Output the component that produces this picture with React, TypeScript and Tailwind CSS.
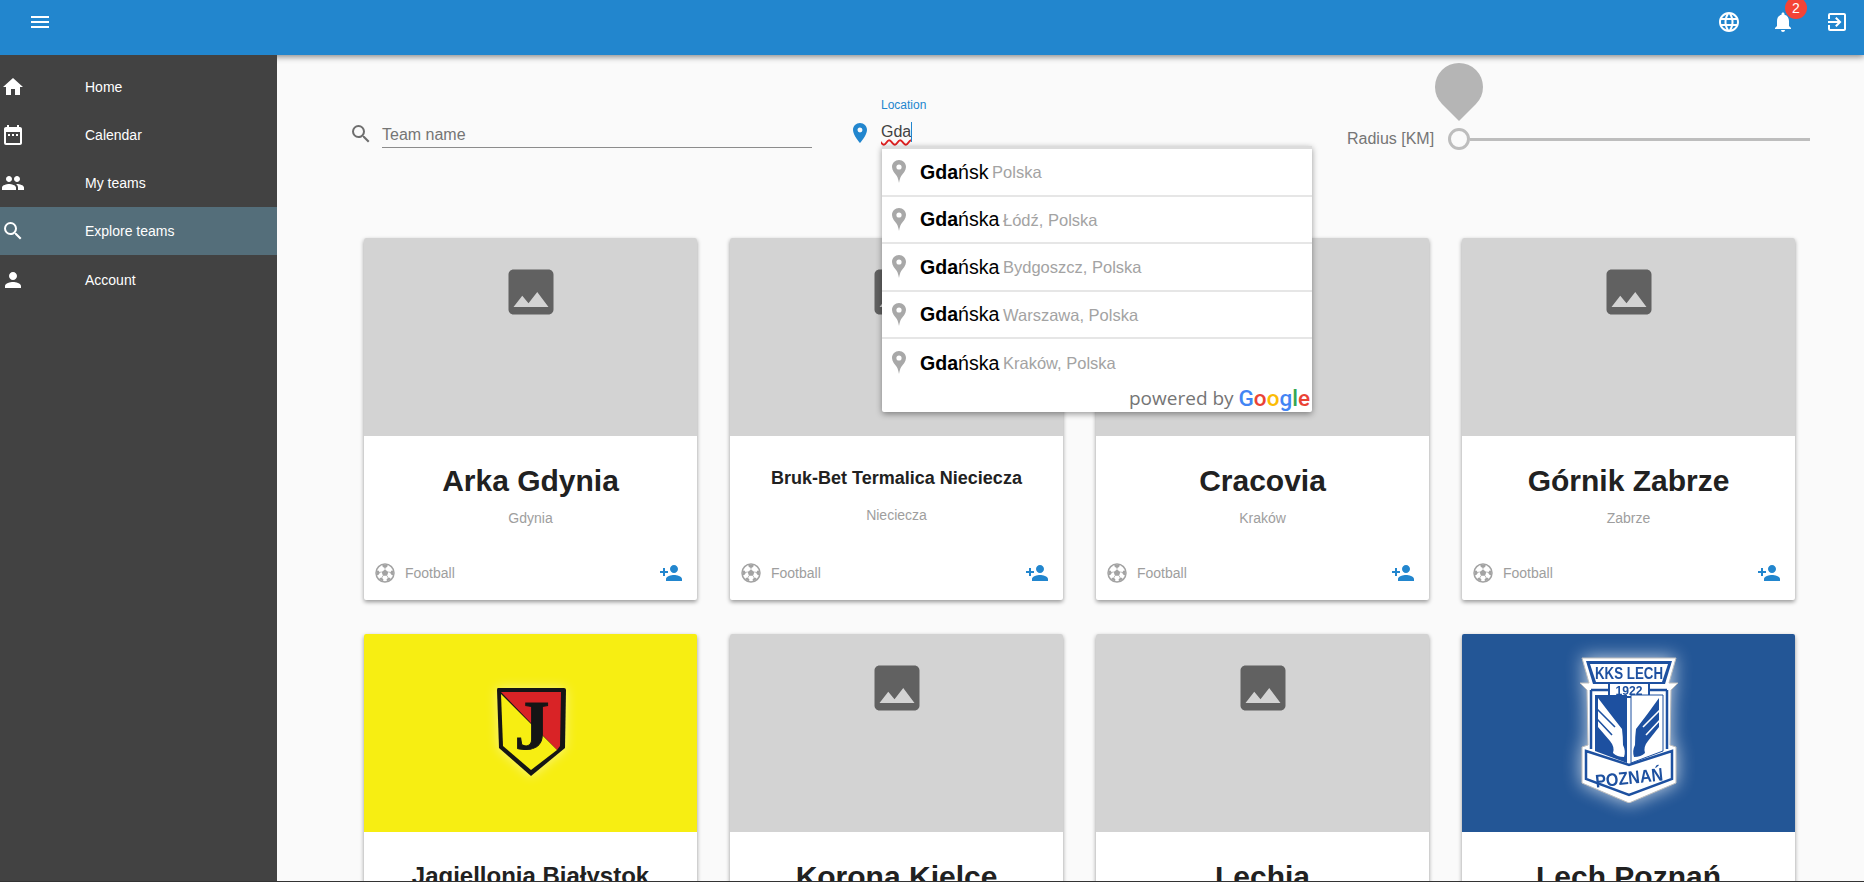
import {
  MdDateRange,
  MdExitToApp,
  MdHome,
  MdImage,
  MdLanguage,
  MdMenu,
  MdNotifications,
  MdPeople,
  MdPerson,
  MdPersonAdd,
  MdPlace,
  MdSearch,
} from "react-icons/md";

const FONT = "font-['Liberation_Sans',Arial,sans-serif]";

const navItems = [
  { label: "Home", icon: MdHome },
  { label: "Calendar", icon: MdDateRange },
  { label: "My teams", icon: MdPeople },
  { label: "Explore teams", icon: MdSearch, active: true },
  { label: "Account", icon: MdPerson, last: true },
];

const suggestions = [
  { rest: "ńsk", place: "Polska" },
  { rest: "ńska", place: "Łódź, Polska" },
  { rest: "ńska", place: "Bydgoszcz, Polska" },
  { rest: "ńska", place: "Warszawa, Polska" },
  { rest: "ńska", place: "Kraków, Polska" },
];

const DEFAULT_TITLE = "text-[30px] mt-[27px] mb-[11px]";

const teams = [
  { name: "Arka Gdynia", city: "Gdynia", title: DEFAULT_TITLE },
  { name: "Bruk-Bet Termalica Nieciecza", city: "Nieciecza", title: "text-[18px] mt-[25px] mb-[10px]" },
  { name: "Cracovia", city: "Kraków", title: DEFAULT_TITLE },
  { name: "Górnik Zabrze", city: "Zabrze", title: DEFAULT_TITLE },
  { name: "Jagiellonia Białystok", city: "Białystok", title: "text-[24px] mt-[27px] mb-[11px]", logo: "jagiellonia" },
  { name: "Korona Kielce", city: "Kielce", title: DEFAULT_TITLE },
  { name: "Lechia", city: "Gdańsk", title: DEFAULT_TITLE },
  { name: "Lech Poznań", city: "Poznań", title: DEFAULT_TITLE, logo: "lech" },
];

function JagielloniaLogo() {
  return (
    <svg viewBox="0 0 72 92" className="w-[72px] h-[92px] drop-shadow-[0_0_6px_rgba(255,255,255,0.5)]">
      <path
        d="M3 2 L69 2 Q71 2 71 4 L70 62 L36 90 L4 62 L2 4 Q2 2 3 2 Z"
        fill="#151515"
      />
      <path d="M6 6 L66 6 L65 60 L62 64 Z" fill="#d92326" />
      <path d="M6 8 L62 64 L36 84 L8 60 Z" fill="#f7ee12" />
      <text
        x="37"
        y="63"
        textAnchor="middle"
        fontFamily="'Liberation Serif', serif"
        fontWeight="700"
        fontSize="70"
        fill="#151515"
        stroke="#151515"
        strokeWidth="1"
      >
        J
      </text>
    </svg>
  );
}

function LechLogo() {
  return (
    <svg viewBox="0 0 100 146" className="w-[100px] h-[146px] drop-shadow-[0_0_9px_rgba(255,255,255,0.75)]">
      <path
        d="M3 1 L97 1 L90 26 L99 26 L92 33 L91 88 L97 90 L97 126 L50 146 L3 126 L3 90 L9 88 L8 33 L1 26 L10 26 Z"
        fill="#ffffff"
        stroke="#bdbdbd"
        strokeWidth="1"
      />
      <path d="M7 4 L93 4 L86 27 L14 27 Z" fill="#1d50a0" />
      <path d="M11 7 L89 7 L83 25 L17 25 Z" fill="#ffffff" />
      <text x="50" y="22" textAnchor="middle" fontFamily="'Liberation Sans', sans-serif" fontWeight="700" fontSize="17" fill="#1d50a0" textLength="68" lengthAdjust="spacingAndGlyphs">
        KKS LECH
      </text>
      <path d="M12 33 L30 33 M70 33 L88 33 M12 33 L12 92 M88 33 L88 92" stroke="#1d50a0" strokeWidth="2.5" fill="none" />
      <rect x="30" y="26" width="40" height="14" fill="#ffffff" stroke="#1d50a0" strokeWidth="2" />
      <text x="50" y="37.5" textAnchor="middle" fontFamily="'Liberation Sans', sans-serif" fontWeight="700" fontSize="13" fill="#1d50a0" textLength="27" lengthAdjust="spacingAndGlyphs">
        1922
      </text>
      <path d="M16 38 L48 38 L48 106 L16 94 Z" fill="#1d50a0" />
      <path d="M52 38 L84 38 L84 94 L52 106 Z" fill="#ffffff" stroke="#1d50a0" strokeWidth="1" />
      <path d="M19 41 Q32 58 43 72 Q44 80 44 88 Q47 94 45 100 Q38 100 34 96 Q36 90 31 84 L19 70 Z" fill="#ffffff" />
      <path d="M80 41 Q68 58 57 72 Q56 80 56 88 Q53 94 55 100 Q62 100 66 96 Q64 90 69 84 L80 70 Z" fill="#1d50a0" />
      <path d="M18 52 L36 70 M18 62 L33 78" stroke="#1d50a0" strokeWidth="1.6" fill="none" />
      <path d="M82 52 L64 70 M82 62 L67 78" stroke="#ffffff" strokeWidth="1.6" fill="none" />
      <path d="M7 94 L50 108 L93 94 L93 122 L50 138 L7 122 Z" fill="#ffffff" stroke="#1d50a0" strokeWidth="2.5" />
      <text x="50" y="127" textAnchor="middle" fontFamily="'Liberation Sans', sans-serif" fontWeight="700" fontSize="18" fill="#1d50a0" textLength="68" lengthAdjust="spacingAndGlyphs" transform="rotate(-6 50 120)">
        POZNAŃ
      </text>
    </svg>
  );
}

function SoccerIcon() {
  return (
    <svg viewBox="0 0 24 24" className="w-[20px] h-[20px] mr-[10px] text-[#a3a3a3]" fill="currentColor">
      <circle cx="12" cy="12" r="10.8" fill="none" stroke="currentColor" strokeWidth="1.8" />
      <path d="M12 7.8 L16 10.7 L14.5 15.4 L9.5 15.4 L8 10.7 Z" />
      <path d="M8.6 2.2 L15.4 2.2 L14.6 4.8 L12 6 L9.4 4.8 Z" />
      <path d="M21.8 9 L22.4 15 L20 14.4 L18.2 12 L19.4 9.2 Z" />
      <path d="M2.2 9 L1.6 15 L4 14.4 L5.8 12 L4.6 9.2 Z" />
      <path d="M5 19.6 L9.6 22 L10 19.8 L8.6 18 L6 17.8 Z" />
      <path d="M19 19.6 L14.4 22 L14 19.8 L15.4 18 L18 17.8 Z" />
      <path d="M12 7.8 L12 5 M16 10.7 L19 11.5 M8 10.7 L5 11.5 M14.5 15.4 L16 18 M9.5 15.4 L8 18" stroke="currentColor" strokeWidth="0.9" fill="none" />
    </svg>
  );
}

function TeamCard({ team }: { team: (typeof teams)[number] }) {
  return (
    <div className="h-[362px] rounded-[2px] bg-white shadow-[0_2px_4px_rgba(0,0,0,0.4)] overflow-hidden flex flex-col shrink-0">
      {team.logo === "jagiellonia" ? (
        <div className="h-[198px] shrink-0 bg-[#f7ee12] flex justify-center pt-[52px]">
          <JagielloniaLogo />
        </div>
      ) : team.logo === "lech" ? (
        <div className="h-[198px] shrink-0 bg-[#235696] flex justify-center pt-[23px]">
          <LechLogo />
        </div>
      ) : (
        <div className="h-[198px] shrink-0 bg-[#d3d3d3] flex justify-center pt-6">
          <MdImage size={60} className="text-[#616161]" />
        </div>
      )}
      <div className="flex-1 flex flex-col items-center px-2">
        <div className={`h-[34px] flex items-center font-bold text-[#212121] whitespace-nowrap ${team.title}`}>
          {team.name}
        </div>
        <div className="text-sm leading-5 text-[#9e9e9e]">{team.city}</div>
      </div>
      <div className="h-[54px] shrink-0 flex items-start justify-between pl-[11px] pr-[14px] pt-[15px]">
        <div className="flex items-center h-6 text-sm text-[#9e9e9e]">
          <SoccerIcon />
          Football
        </div>
        <MdPersonAdd size={24} className="text-[#2286ce]" />
      </div>
    </div>
  );
}

function PinIcon() {
  return (
    <svg viewBox="0 0 14 23" className="w-[14px] h-[23px] shrink-0">
      <path
        fillRule="evenodd"
        d="M7 0 C3.1 0 0 3.1 0 7 C0 10.5 3 13.5 4.8 16 C5.8 17.6 6.4 20 7 23 C7.6 20 8.2 17.6 9.2 16 C11 13.5 14 10.5 14 7 C14 3.1 10.9 0 7 0 Z M7 4.4 A2.6 2.6 0 1 1 7 9.6 A2.6 2.6 0 1 1 7 4.4 Z"
        fill="#a8a8a8"
      />
    </svg>
  );
}

function LocationDropdown() {
  return (
    <div className="absolute left-px top-[26px] w-[430px] h-[266px] bg-white border-t-[3px] border-[#dcdcdc] rounded-b-[2px] shadow-[0_2px_6px_rgba(0,0,0,0.4)] flex flex-col">
      {suggestions.map((s, i) => (
        <div
          key={s.place}
          className={`h-[47.5px] shrink-0 flex items-center pl-[10px] ${i < 4 ? "border-b-2 border-[#e6e6e6]" : ""}`}
        >
          <PinIcon />
          <span className="ml-[14px] pt-px text-[19.6px] text-black whitespace-nowrap">
            <span className="font-bold">Gda</span>
            {s.rest}
          </span>
          <span className="ml-[3.5px] pt-[2px] text-[16.5px] text-[#a3a3a3] whitespace-nowrap">{s.place}</span>
        </div>
      ))}
      <div className="flex-1 flex items-center justify-end pr-[2px] pb-[2px] font-['Open_Sans',sans-serif] text-[19px] leading-none text-[#757575]">
        powered by&nbsp;
        <span className="font-['Roboto',sans-serif] text-[22.5px] font-medium">
          <span className="text-[#4285f4]">G</span>
          <span className="text-[#ea4335]">o</span>
          <span className="text-[#fbbc05]">o</span>
          <span className="text-[#4285f4]">g</span>
          <span className="text-[#34a853]">l</span>
          <span className="text-[#ea4335]">e</span>
        </span>
      </div>
    </div>
  );
}

function Filters() {
  return (
    <div className="relative z-30 h-[183px] shrink-0 flex items-start pl-[72px] pt-[65px]">
      <div className="flex">
        <MdSearch size={24} className="text-[#6e6e6e] mt-[2px]" />
        <div className="ml-[9px] w-[430px] h-[28px] border-b border-[#8c8c8c] text-base text-[#757575] flex items-center pt-[3px]">
          Team name
        </div>
      </div>
      <div className="flex ml-[36px]">
        <MdPlace size={24} className="text-[#2286ce] mt-px" />
        <div className="relative ml-[9px] w-[431px] h-[28px] flex items-start text-base text-[#424242]">
          <span className="absolute left-0 -top-[23px] text-xs text-[#2286ce]">Location</span>
          <span className="underline decoration-wavy decoration-[#e02020] decoration-[1.5px] underline-offset-2">Gda</span>
          <span className="w-px h-[20px] mt-[2px] bg-[#2286ce]" />
          <LocationDropdown />
        </div>
      </div>
      <div className="relative flex items-center ml-[35px] h-[38px] text-base text-[#757575]">
        <span className="w-[87px] whitespace-nowrap">Radius [KM]</span>
        <div className="ml-[14px] w-[22px] h-[22px] rounded-full border-[3px] border-[#bdbdbd] shrink-0" />
        <div className="w-[340px] h-[3px] bg-[#bdbdbd]" />
        <div className="absolute left-[88px] -top-[57px] w-[48px] h-[48px] bg-[#b5b5b5] rounded-[50%_50%_0_50%] rotate-45" />
      </div>
    </div>
  );
}

export default function App() {
  return (
    <div className={`h-screen w-screen overflow-hidden flex flex-col bg-[#fafafa] ${FONT}`}>
      <header className="relative z-10 h-[55px] shrink-0 bg-[#2286ce] shadow-[0_2px_6px_rgba(0,0,0,0.45)] flex items-start justify-between pl-7 pr-[15px] pt-[10px] text-white">
        <MdMenu size={24} />
        <div className="flex gap-[30px]">
          <MdLanguage size={24} />
          <div className="relative">
            <MdNotifications size={24} />
            <span className="absolute left-[14px] -top-[13px] w-[22px] h-[22px] rounded-full bg-[#f44336] text-sm flex items-center justify-center">
              2
            </span>
          </div>
          <MdExitToApp size={24} />
        </div>
      </header>
      <div className="flex-1 flex min-h-0">
        <aside className="relative z-20 w-[277px] shrink-0 bg-[#424242] pt-2 text-sm text-white">
          {navItems.map((item) => (
            <div
              key={item.label}
              className={`flex items-center pl-[1px] ${item.last ? "h-[50px]" : "h-[48px]"} ${item.active ? "bg-[#546e7a]" : ""}`}
            >
              <item.icon size={24} />
              <span className="ml-[60px]">{item.label}</span>
            </div>
          ))}
        </aside>
        <main className="flex-1 min-w-0 flex flex-col">
          <Filters />
          <div className="grid grid-cols-[repeat(4,333px)] gap-x-[33px] gap-y-[34px] pl-[87px]">
            {teams.map((team) => (
              <TeamCard key={team.name} team={team} />
            ))}
          </div>
        </main>
      </div>
      <div className="relative z-40 h-px shrink-0 bg-[#333333]" />
    </div>
  );
}
